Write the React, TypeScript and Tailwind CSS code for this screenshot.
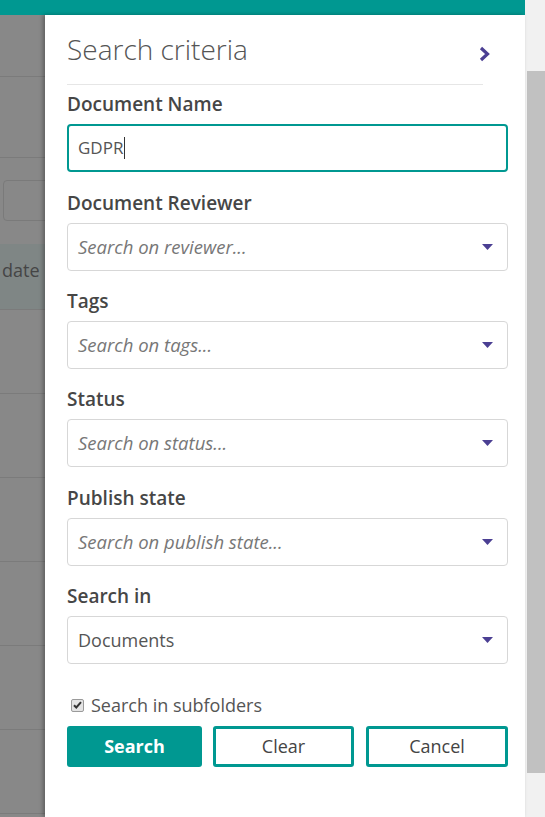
const fields = [
  { label: "Document Reviewer", placeholder: "Search on reviewer...", mb: "mb-[18px]" },
  { label: "Tags", placeholder: "Search on tags...", mb: "mb-[18px]" },
  { label: "Status", placeholder: "Search on status...", mb: "mb-[19px]" },
  { label: "Publish state", placeholder: "Search on publish state...", mb: "mb-[18px]" },
];

function Caret() {
  return (
    <svg width="11" height="6" viewBox="0 0 11 6" className="shrink-0">
      <path d="M0 0h11L5.5 6z" fill="#4b3f93" />
    </svg>
  );
}

function SelectBox({ text, placeholder }: { text?: string; placeholder?: boolean }) {
  return (
    <div className="flex h-[48px] items-center justify-between rounded-[4px] border border-[#d7d7d7] pl-[10px] pr-[14px]">
      <span className={placeholder ? "text-[18.5px] italic text-[#777]" : "text-[18px] text-[#555]"}>{text}</span>
      <Caret />
    </div>
  );
}

function Label({ children }: { children: React.ReactNode }) {
  return (
    <div className="mb-[8px] h-[24px] text-[19px] font-semibold leading-[24px] text-[#464646]">{children}</div>
  );
}

export default function App() {
  const rows = [0, 1, 2, 3, 4, 5];
  return (
    <div className="flex h-[817px] w-[545px] overflow-hidden bg-white font-['Open_Sans',sans-serif] text-[17px]">
      <div className="flex w-[525px] flex-col">
        <div className="h-[15px] shrink-0 bg-[#009891]" />
        <div className="flex flex-1">
          {/* page behind the overlay */}
          <div className="w-[45px] shrink-0 overflow-hidden bg-[#888888]">
            <div className="h-[62px] border-b border-[#7b7b7b]" />
            <div className="h-[81px] border-b border-[#7b7b7b]" />
            <div className="h-[86px] pl-[3px] pt-[22px]">
              <div className="h-[41px] w-[60px] rounded-[4px] border border-[#7a7a7a]" />
            </div>
            <div className="h-[66px] border-b border-[#7b7b7b] bg-[#7f8685] pl-[2px] pt-[14px] text-[18px] leading-[24px] text-[#454545]">
              date
            </div>
            {rows.map((r) => (
              <div key={r} className="h-[84px] border-b border-[#7b7b7b]" />
            ))}
          </div>

          {/* search panel */}
          <div className="relative flex-1 bg-white pl-[22px] pr-[17px] shadow-[-2px_0_4px_rgba(0,0,0,0.3)]">
            <div className="flex w-[416px] items-center justify-between border-b border-[#e6e6e6] pb-[17px] pt-[16px]">
              <span className="text-[28px] font-light leading-[36px] text-[#555]">Search criteria</span>
              <svg width="11" height="16" viewBox="0 0 11 16" className="-mr-[7px] mt-[10px] shrink-0">
                <path d="M2 2l6.5 6L2 14" fill="none" stroke="#4b3f93" strokeWidth="3.2" />
              </svg>
            </div>

            <div className="mt-[7px]">
              <Label>Document Name</Label>
              <div className="mb-[19px] flex h-[48px] items-center rounded-[4px] border-2 border-[#009891] pl-[9px] text-[#555]">
                GDPR
                <span className="ml-px h-[22px] w-px bg-[#333]" />
              </div>

              {fields.map((f) => (
                <div key={f.label} className={f.mb}>
                  <Label>{f.label}</Label>
                  <SelectBox text={f.placeholder} placeholder />
                </div>
              ))}

              <Label>Search in</Label>
              <SelectBox text="Documents" />

              <div className="mt-[29px] flex h-[24px] items-center text-[18px] leading-[24px] text-[#555]">
                <span className="ml-[4px] mr-[7px] flex h-[13px] w-[13px] items-center justify-center rounded-[2px] border border-[#9a9a9a] bg-[#e4e4e4]">
                  <svg width="9" height="8" viewBox="0 0 9 8">
                    <path d="M1 4.2l2.3 2.3L8 1.2" fill="none" stroke="#333" strokeWidth="2" />
                  </svg>
                </span>
                Search in subfolders
              </div>

              <div className="mt-[9px] flex text-[18px]">
                <button className="h-[41px] w-[135px] rounded-[3px] bg-[#009891] font-bold text-white">Search</button>
                <button className="ml-[11px] h-[41px] w-[141px] rounded-[3px] border-[3px] border-[#009891] bg-white text-[#444]">
                  Clear
                </button>
                <button className="ml-[12px] h-[41px] w-[142px] rounded-[3px] border-[3px] border-[#009891] bg-white text-[#444]">
                  Cancel
                </button>
              </div>
            </div>
          </div>
        </div>
      </div>

      {/* scrollbar */}
      <div className="w-[20px] shrink-0 bg-[#f1f1f1] pl-[2px] pt-[71px]">
        <div className="h-[702px] bg-[#c1c1c1]" />
      </div>
    </div>
  );
}
